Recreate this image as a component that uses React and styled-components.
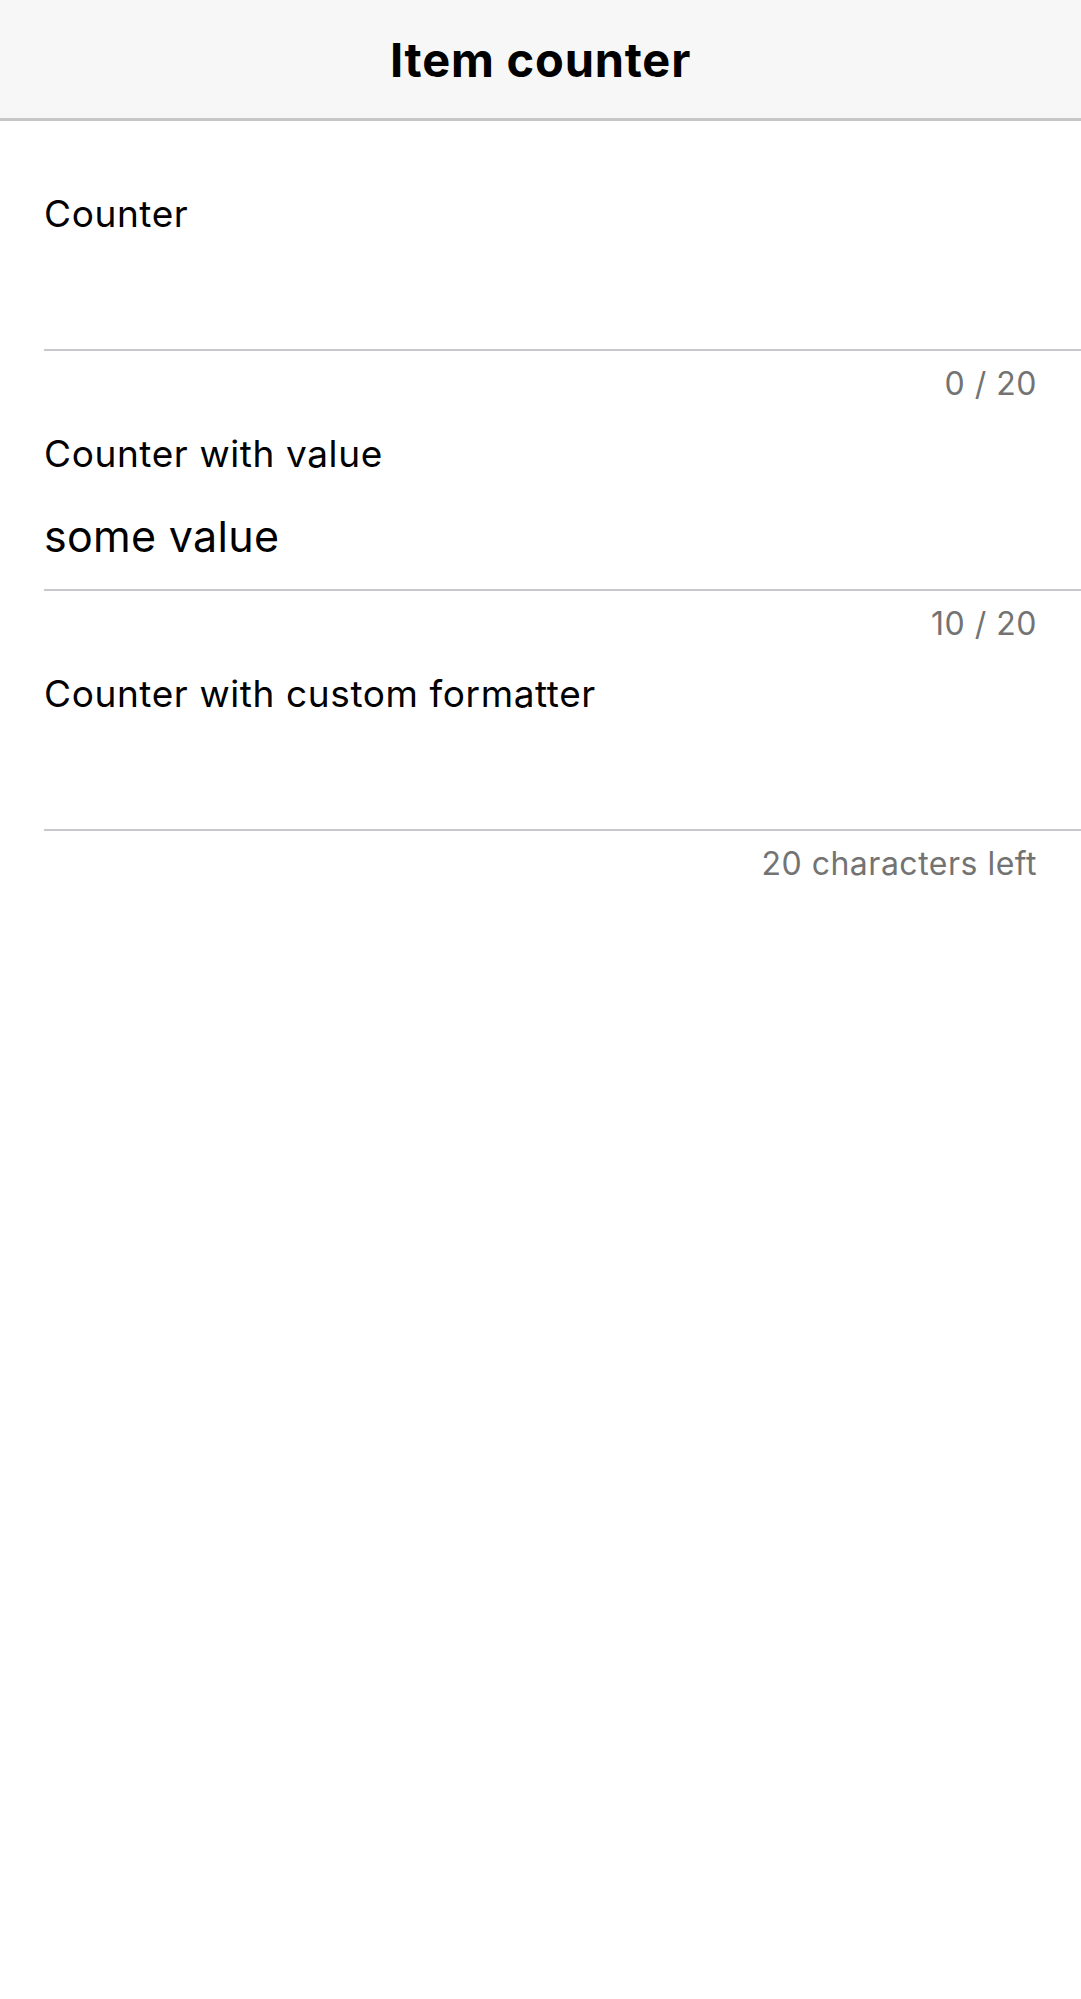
import React from "react";
import styled, { createGlobalStyle } from "styled-components";

const GlobalStyle = createGlobalStyle`
  html, body {
    margin: 0;
    padding: 0;
    background: #ffffff;
    font-family: Inter, "Noto Sans", "Liberation Sans", sans-serif;
    -webkit-font-smoothing: antialiased;
  }
  * { box-sizing: border-box; }
`;

const Page = styled.div`
  min-height: 1999px;
  background: #ffffff;
`;

const Toolbar = styled.header`
  height: 121px;
  background: #f7f7f7;
  border-bottom: 3px solid #c6c6c8;
  display: flex;
  align-items: center;
  justify-content: center;
`;

const Title = styled.h1`
  margin: 0;
  font-size: 47px;
  font-weight: 700;
  color: #000;
  letter-spacing: 0.8px;
`;

const Content = styled.main`
  padding-top: 43px;
  display: flex;
  flex-direction: column;
`;

const Field = styled.div`
  padding-top: 28px;
  display: flex;
  flex-direction: column;
`;

const InputBox = styled.label`
  margin-left: 44px;
  display: flex;
  flex-direction: column;
  border-bottom: 2px solid #c8c7cc;
`;

const Label = styled.span`
  font-size: 37px;
  line-height: 44px;
  color: #000;
  letter-spacing: 0.6px;
`;

const Input = styled.input`
  display: block;
  width: 100%;
  height: 113px;
  padding: 34px 0 27px;
  border: none;
  outline: none;
  background: transparent;
  font-family: inherit;
  font-size: 43px;
  line-height: 52px;
  color: #000;
  letter-spacing: 0.3px;
`;

const Counter = styled.div`
  margin-top: 13px;
  height: 40px;
  padding-right: 44px;
  text-align: right;
  font-size: 32px;
  line-height: 40px;
  color: #737373;
  letter-spacing: 0.5px;
`;

const fields = [
  { label: "Counter", value: "", counter: (n) => `${n} / 20` },
  { label: "Counter with value", value: "some value", counter: (n) => `${n} / 20` },
  {
    label: "Counter with custom formatter",
    value: "",
    counter: (n) => `${20 - n} characters left`,
  },
];

export default function App() {
  return (
    <Page>
      <GlobalStyle />
      <Toolbar>
        <Title>Item counter</Title>
      </Toolbar>
      <Content>
        {fields.map((f) => (
          <Field key={f.label}>
            <InputBox>
              <Label>{f.label}</Label>
              <Input defaultValue={f.value} maxLength={20} />
            </InputBox>
            <Counter>{f.counter(f.value.length)}</Counter>
          </Field>
        ))}
      </Content>
    </Page>
  );
}
